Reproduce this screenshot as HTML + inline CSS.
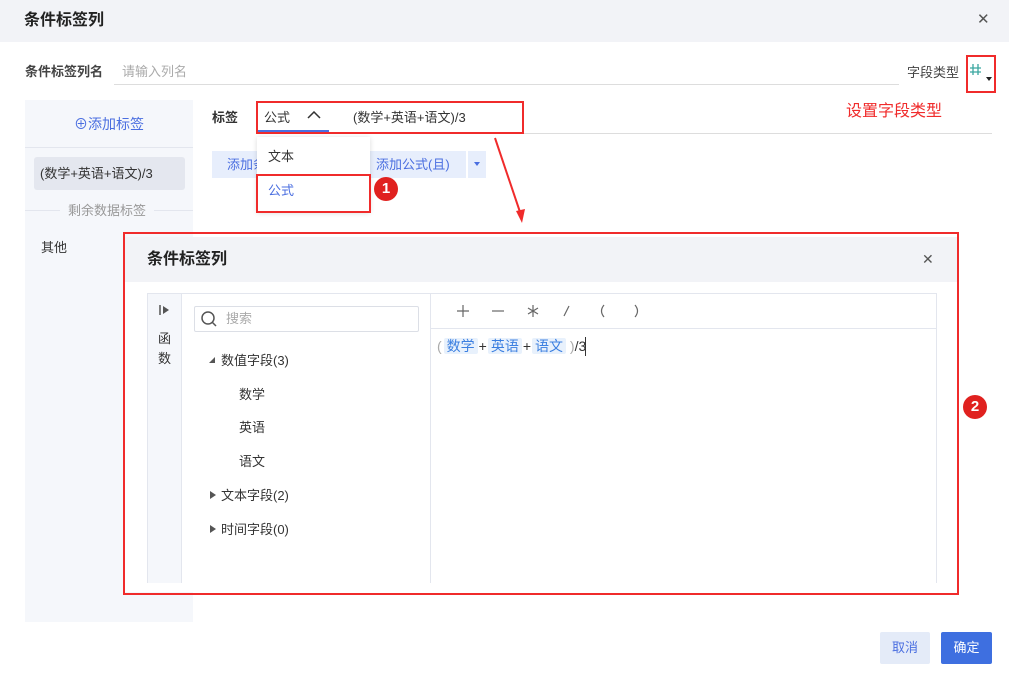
<!DOCTYPE html><html><head><meta charset="utf-8"><style>
*{margin:0;padding:0;box-sizing:border-box}
body{width:1009px;height:673px;position:relative;background:#fff;font-family:"Liberation Sans","Noto Sans CJK SC",sans-serif;font-size:13px;color:#333;overflow:hidden}
.a{position:absolute;line-height:16px}
.red{position:absolute;border:2px solid #f02b2b}
.badge{position:absolute;width:24px;height:24px;border-radius:50%;background:#e0211f;color:#fff;font-weight:bold;font-size:15px;text-align:center;line-height:24px}
.t{background:#e8f1fc;color:#3b7fe0;padding:0 3px;border-radius:2px}
</style></head><body>
<div class="a" style="left:0;top:0;width:1009px;height:42px;background:#f2f3f7"></div>
<div class="a" style="left:24px;top:13px;font-size:16px;font-weight:bold;color:#222">条件标签列</div>
<div class="a" style="left:977px;top:12px;font-size:15px;color:#555">✕</div>
<div class="a" style="left:25px;top:64px;font-weight:bold;color:#444">条件标签列名</div>
<div class="a" style="left:122px;top:64px;color:#aaa">请输入列名</div>
<div class="a" style="left:114px;top:84px;width:785px;height:1px;background:#ddd"></div>
<div class="a" style="left:907px;top:65px;color:#444">字段类型</div>
<svg class="a" style="left:969px;top:63px" width="14" height="14"><path d="M4 1V12M9 1V12M1 5H12M1 9H12" stroke="#3aa6a0" stroke-width="1.3" fill="none"/></svg>
<div class="a" style="left:986px;top:77px;width:0;height:0;border-left:3px solid transparent;border-right:3px solid transparent;border-top:4px solid #222"></div>
<div class="red" style="left:966px;top:55px;width:30px;height:38px"></div>
<div class="a" style="left:846px;top:104px;color:#f02b2b;font-size:16px">设置字段类型</div>
<div class="a" style="left:25px;top:100px;width:168px;height:522px;background:#f5f7fb"></div>
<div class="a" style="left:74px;top:116px;color:#4a6ee0;font-size:14px">⊕添加标签</div>
<div class="a" style="left:25px;top:147px;width:168px;height:1px;background:#e3e6ee"></div>
<div class="a" style="left:34px;top:157px;width:151px;height:33px;background:#e4e7ef;border-radius:3px;padding:9px 6px;color:#333">(数学+英语+语文)/3</div>
<div class="a" style="left:25px;top:210px;width:168px;height:1px;background:#e3e6ee"></div>
<div class="a" style="left:60px;top:203px;padding:0 8px;background:#f5f7fb;color:#999">剩余数据标签</div>
<div class="a" style="left:41px;top:240px;color:#333">其他</div>
<div class="a" style="left:212px;top:110px;font-weight:bold;color:#333">标签</div>
<div class="a" style="left:264px;top:110px;color:#333">公式</div>
<svg class="a" style="left:307px;top:111px" width="14" height="10"><path d="M1 7L7 1L13 7" stroke="#333" stroke-width="1.5" fill="none"/></svg>
<div class="a" style="left:258px;top:130px;width:71px;height:2px;background:#4a6ee0"></div>
<div class="a" style="left:353px;top:110px;color:#333">(数学+英语+语文)/3</div>
<div class="a" style="left:520px;top:133px;width:472px;height:1px;background:#ddd"></div>
<div class="red" style="left:256px;top:101px;width:268px;height:33px"></div>
<div class="a" style="left:212px;top:151px;width:155px;height:27px;background:#e7eefc;color:#4a6ee0;padding:6px 15px">添加条件</div>
<div class="a" style="left:368px;top:151px;width:98px;height:27px;background:#e7eefc;color:#4a6ee0;padding:6px 8px">添加公式(且)</div>
<div class="a" style="left:468px;top:151px;width:18px;height:27px;background:#e7eefc"></div>
<div class="a" style="left:474px;top:162px;border-left:3px solid transparent;border-right:3px solid transparent;border-top:4px solid #4a6ee0"></div>
<div class="a" style="left:257px;top:137px;width:113px;height:75px;background:#fff;box-shadow:0 1px 5px rgba(0,0,0,.15)"></div>
<div class="a" style="left:268px;top:149px;color:#333">文本</div>
<div class="a" style="left:268px;top:183px;color:#4a6ee0">公式</div>
<div class="red" style="left:256px;top:174px;width:115px;height:39px"></div>
<div class="badge" style="left:374px;top:177px">1</div>
<svg class="a" style="left:490px;top:135px" width="40" height="95"><line x1="5" y1="3" x2="31" y2="80" stroke="#f02b2b" stroke-width="2"/><path d="M26 76 L32 88 L35 74Z" fill="#f02b2b"/></svg>
<div class="a" style="left:125px;top:237px;width:832px;height:355px;background:#fff"></div>
<div class="a" style="left:125px;top:237px;width:832px;height:45px;background:#f2f3f7"></div>
<div class="a" style="left:147px;top:252px;font-size:16px;font-weight:bold;color:#222">条件标签列</div>
<div class="a" style="left:922px;top:251px;font-size:14px;color:#555">✕</div>
<div class="a" style="left:147px;top:293px;width:790px;height:290px;border:1px solid #e3e6ee;border-bottom:none"></div>
<div class="a" style="left:148px;top:294px;width:34px;height:289px;background:#f5f7fb;border-right:1px solid #e3e6ee"></div>
<svg class="a" style="left:159px;top:305px" width="12" height="10"><path d="M1 0V10" stroke="#555" stroke-width="1.5"/><path d="M4 1L10 5L4 9Z" fill="#555"/></svg>
<div class="a" style="left:158px;top:329px;color:#333;line-height:20px;width:14px">函数</div>
<div class="a" style="left:194px;top:306px;width:225px;height:26px;border:1px solid #dcdfe6;border-radius:2px"></div>
<svg class="a" style="left:200px;top:310px" width="18" height="18"><circle cx="8" cy="8" r="6" fill="none" stroke="#555" stroke-width="1.5"/><line x1="12.5" y1="12.5" x2="16" y2="16" stroke="#555" stroke-width="1.5"/></svg>
<div class="a" style="left:226px;top:311px;color:#aaa">搜索</div>
<svg class="a" style="left:208px;top:356px" width="8" height="8"><path d="M7 1V7H1Z" fill="#555"/></svg>
<div class="a" style="left:221px;top:353px">数值字段(3)</div>
<div class="a" style="left:239px;top:387px">数学</div>
<div class="a" style="left:239px;top:420px">英语</div>
<div class="a" style="left:239px;top:454px">语文</div>
<svg class="a" style="left:209px;top:490px" width="8" height="10"><path d="M1 1L7 5L1 9Z" fill="#555"/></svg>
<div class="a" style="left:221px;top:488px">文本字段(2)</div>
<svg class="a" style="left:209px;top:524px" width="8" height="10"><path d="M1 1L7 5L1 9Z" fill="#555"/></svg>
<div class="a" style="left:221px;top:522px">时间字段(0)</div>
<div class="a" style="left:430px;top:294px;width:1px;height:289px;background:#e3e6ee"></div>
<div class="a" style="left:431px;top:328px;width:505px;height:1px;background:#e3e6ee"></div>
<svg class="a" style="left:455px;top:303px" width="200" height="16"><g stroke="#666" stroke-width="1.2" fill="none"><path d="M8 2V14M2 8H14"/><path d="M37 8H49"/><path d="M78 2V14M73 5L83 11M83 5L73 11"/><path d="M114 3L109 13"/><path d="M149 2Q144 8 149 14"/><path d="M180 2Q185 8 180 14"/></g></svg>
<div class="a" style="left:437px;top:337px;font-size:14px;line-height:18px;color:#aaa;white-space:nowrap">(<span class="t" style="margin-left:2px">数学</span><span style="color:#333;margin:0 1px">+</span><span class="t">英语</span><span style="color:#333;margin:0 1px">+</span><span class="t">语文</span> )<span style="color:#333">/3</span></div>
<div class="a" style="left:585px;top:337px;width:1px;height:19px;background:#333"></div>
<div class="red" style="left:123px;top:232px;width:836px;height:363px"></div>
<div class="badge" style="left:963px;top:395px">2</div>
<div class="a" style="left:880px;top:632px;width:50px;height:32px;background:#e4ebf8;color:#4a6ee0;text-align:center;line-height:32px;border-radius:2px">取消</div>
<div class="a" style="left:941px;top:632px;width:51px;height:32px;background:#3e6fe0;color:#fff;text-align:center;line-height:32px;border-radius:2px">确定</div>
</body></html>
